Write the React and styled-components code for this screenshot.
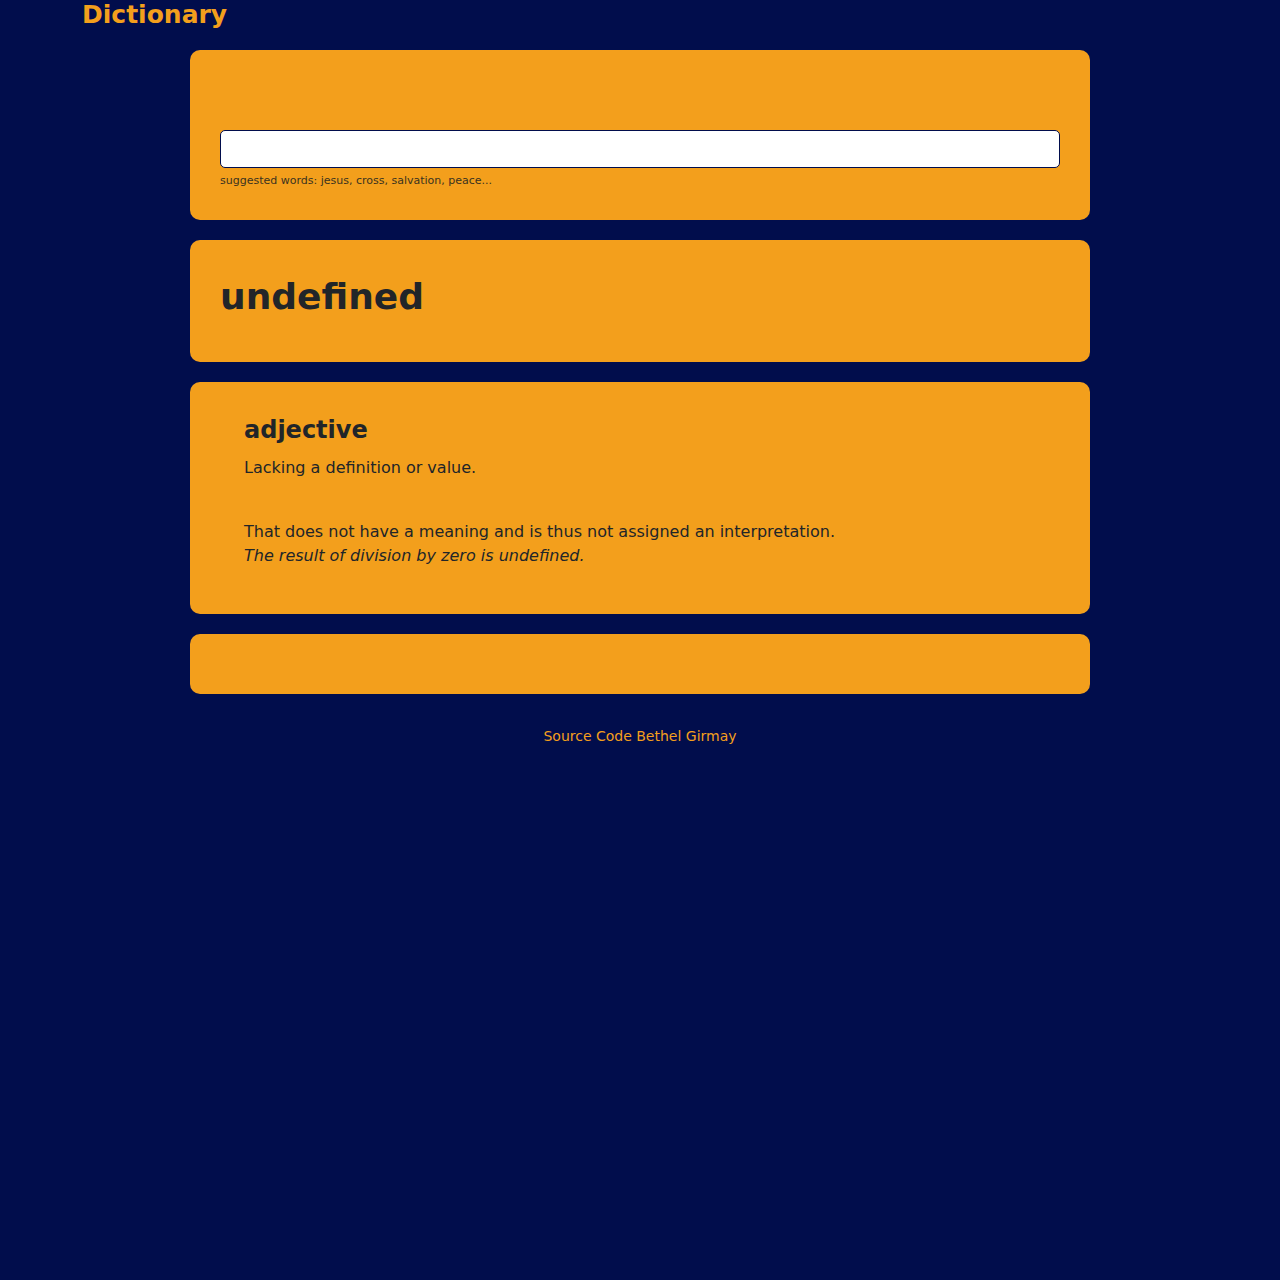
import React from 'react';
import styled, { createGlobalStyle } from 'styled-components';

const GlobalStyle = createGlobalStyle`
  html, body {
    margin: 0;
    padding: 0;
    background-color: #010d4c;
    font-family: "DejaVu Sans", "Noto Sans", sans-serif;
    color: #212529;
    font-size: 16px;
    line-height: 1.5;
  }
  * {
    box-sizing: border-box;
  }
`;

const Page = styled.div`
  max-width: 1140px;
  margin: 0 auto;
  padding: 0 12px;
  min-height: 1280px;
`;

const Brand = styled.h1`
  margin: 0;
  color: #f39f1c;
  font-size: 25px;
  font-weight: 700;
  line-height: 1.2;
  height: 29px;
`;

const Main = styled.main`
  max-width: 900px;
  margin: 21px auto 0;
  display: flex;
  flex-direction: column;
  gap: 20px;
`;

const Card = styled.section`
  background-color: #f39f1c;
  border-radius: 10px;
  padding: 30px;
`;

const SearchLabel = styled.div`
  height: 50px;
`;

const SearchInput = styled.input`
  display: block;
  width: 100%;
  height: 38px;
  border: 1px solid #010d4c;
  border-radius: 5px;
  background: #fff;
  font-family: inherit;
  font-size: 16px;
  padding: 0 12px;
  outline: none;
`;

const Hint = styled.div`
  margin: 4px 0 1px;
  font-size: 11px;
  line-height: 17px;
  color: #3a3320;
`;

const Word = styled.h1`
  margin: 5px 0 14px;
  font-size: 36px;
  font-weight: 700;
  line-height: 1.2;
`;

const Meaning = styled.div`
  padding-left: 24px;
`;

const PartOfSpeech = styled.h3`
  margin: 4px 0 11px;
  font-size: 24px;
  font-weight: 700;
  line-height: 1.2;
`;

const Definition = styled.div`
  margin-bottom: 16px;
`;

const DefText = styled.p`
  margin: 0;
`;

const Example = styled.div`
  font-style: italic;
  min-height: 24px;
`;

const Footer = styled.footer`
  margin-top: 32px;
  text-align: center;
  font-size: 14px;
  line-height: 1.5;
  color: #f39f1c;

  a {
    color: inherit;
    text-decoration: none;
  }
`;

const definitions = [
  { definition: 'Lacking a definition or value.', example: '' },
  {
    definition: 'That does not have a meaning and is thus not assigned an interpretation.',
    example: 'The result of division by zero is undefined.',
  },
];

export default function App() {
  return (
    <>
      <GlobalStyle />
      <Page>
        <Brand>Dictionary</Brand>
        <Main>
          <Card>
            <SearchLabel />
            <SearchInput type="search" />
            <Hint>suggested words: jesus, cross, salvation, peace...</Hint>
          </Card>
          <Card>
            <Word>undefined</Word>
          </Card>
          <Card>
            <Meaning>
              <PartOfSpeech>adjective</PartOfSpeech>
              {definitions.map((d, i) => (
                <Definition key={i}>
                  <DefText>{d.definition}</DefText>
                  <Example>{d.example}</Example>
                </Definition>
              ))}
            </Meaning>
          </Card>
          <Card />
        </Main>
        <Footer>
          <a href="#">Source Code</a> Bethel Girmay
        </Footer>
      </Page>
    </>
  );
}
